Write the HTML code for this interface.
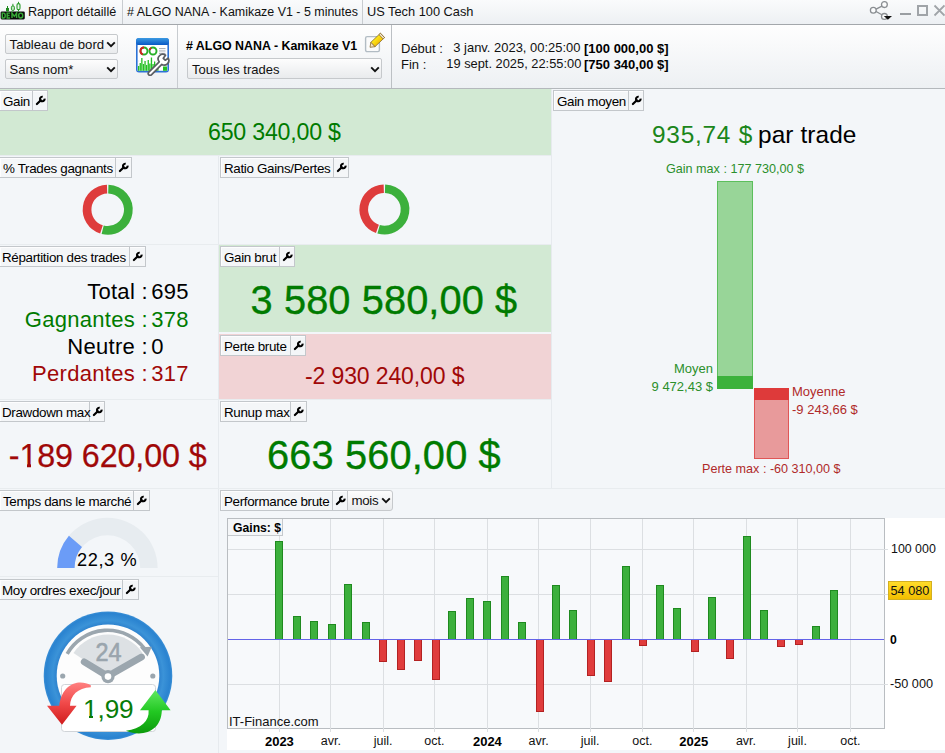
<!DOCTYPE html>
<html><head><meta charset="utf-8">
<style>
*{margin:0;padding:0;box-sizing:border-box}
html,body{width:945px;height:753px;overflow:hidden;background:#f3f6f9;font-family:"Liberation Sans",sans-serif;color:#000;position:relative}
.a{position:absolute}
.t{position:absolute;white-space:pre}
.lb{position:absolute;height:21px;border:1px solid #c3c7cb;background:#f4f6f8;box-shadow:inset 1px 1px 0 #fdfdfe}
.sel{position:absolute;border:1px solid #c6c9cc;border-radius:2px;background:linear-gradient(#fdfdfd,#e9ebed)}
</style></head><body>

<div class="a" style="left:0;top:0;width:945px;height:24px;background:linear-gradient(#fafbfc,#edf0f3)"></div>
<div class="a" style="left:0;top:24px;width:945px;height:1px;background:#a3a7ab"></div>
<svg class="a" style="left:0;top:1px" width="26" height="20" viewBox="0 1 26 20">
<rect x="0.6" y="11.4" width="24.2" height="8" rx="1.3" fill="#0a0a0a"/>
<g fill="none" stroke="#36a836" stroke-width="1.45"><path d="M2.3 13.1 V18 H3.7 Q5.2 18 5.2 15.55 Q5.2 13.1 3.7 13.1 Z"/><path d="M10.1 13.1 H7.2 V18 H10.1 M7.2 15.5 H9.6"/><path d="M12 18.1 V13.1 L14.3 16.3 L16.6 13.1 V18.1"/><ellipse cx="20.7" cy="15.55" rx="2.05" ry="2.45"/></g>
<line x1="7.5" y1="6" x2="7.5" y2="11.4" stroke="#1f8a1f" stroke-width="1"/><rect x="6" y="8" width="3" height="3.4" fill="#1f8a1f"/>
<line x1="12.9" y1="3.8" x2="12.9" y2="11.4" stroke="#2a9a2a" stroke-width="1"/><rect x="11.4" y="6" width="3" height="4.4" rx="1.2" fill="#bfe6bf" stroke="#2a9a2a" stroke-width="1"/>
<line x1="18.5" y1="1.8" x2="18.5" y2="11.4" stroke="#2a9a2a" stroke-width="1"/><rect x="17" y="3.6" width="3" height="6" rx="1.4" fill="#e8f5e8" stroke="#2a9a2a" stroke-width="1.1"/>
</svg>
<div class="t" style="left:28px;top:6.33px;font-size:12.6px;line-height:12.6px;color:#111;font-weight:normal;letter-spacing:0px;">Rapport détaillé</div>
<div class="a" style="left:122px;top:0;width:1px;height:24px;background:#c8ccd0"></div>
<div class="t" style="left:127px;top:6.46px;font-size:12.45px;line-height:12.45px;color:#111;font-weight:normal;letter-spacing:0px;"># ALGO NANA - Kamikaze V1 - 5 minutes</div>
<div class="a" style="left:362px;top:0;width:1px;height:24px;background:#c8ccd0"></div>
<div class="t" style="left:367px;top:6.16px;font-size:12.8px;line-height:12.8px;color:#111;font-weight:normal;letter-spacing:0px;">US Tech 100 Cash</div>
<svg class="a" style="left:864px;top:0" width="32" height="24" viewBox="0 0 32 24">
<g fill="#fbfcfd" stroke="#8a8e92" stroke-width="1.3">
<path d="M17.9 6.2 L11.6 9.3 M11.6 11.3 L17.9 14.8" fill="none"/>
<circle cx="20.4" cy="4.6" r="2.9"/><circle cx="9.3" cy="10.2" r="2.9"/><circle cx="20.4" cy="16.4" r="2.9"/>
</g><path d="M19.8 16 L28 16 L23.9 19.8 Z" fill="#111"/>
</svg>
<div class="a" style="left:900px;top:13px;width:11px;height:2px;background:#9a9ea2"></div>
<div class="a" style="left:917px;top:5px;width:11px;height:11px;border:2px solid #a0a4a8"></div>
<svg class="a" style="left:933px;top:4px" width="14" height="14" viewBox="0 0 14 14"><path d="M1.5 1.5 L11.5 11.5 M11.5 1.5 L1.5 11.5" stroke="#a0a4a8" stroke-width="1.8"/></svg>
<div class="a" style="left:0;top:25px;width:945px;height:63px;background:linear-gradient(#fefefe,#edf0f3)"></div>
<div class="a" style="left:0;top:88px;width:945px;height:1px;background:#b4b8bc"></div>
<div class="sel" style="left:5px;top:34px;width:113px;height:20px"></div>
<div class="t" style="left:9.6px;top:37.83px;font-size:13.2px;line-height:13.2px;color:#111;font-weight:normal;letter-spacing:0px;">Tableau de bord</div>
<svg class="a" style="left:106px;top:41px" width="10" height="7" viewBox="0 0 10 7"><path d="M1.2 1.4 L5 5.2 L8.8 1.4" fill="none" stroke="#111" stroke-width="1.9"/></svg>
<div class="sel" style="left:5px;top:59px;width:113px;height:20px"></div>
<div class="t" style="left:9.6px;top:63.00px;font-size:13px;line-height:13px;color:#111;font-weight:normal;letter-spacing:0px;">Sans nom*</div>
<svg class="a" style="left:106px;top:66px" width="10" height="7" viewBox="0 0 10 7"><path d="M1.2 1.4 L5 5.2 L8.8 1.4" fill="none" stroke="#111" stroke-width="1.9"/></svg>
<svg class="a" style="left:134px;top:36px" width="40" height="40" viewBox="0 0 40 40">
<defs><linearGradient id="hb" x1="0" y1="0" x2="0" y2="1"><stop offset="0" stop-color="#3b9ae2"/><stop offset="1" stop-color="#0858c4"/></linearGradient></defs>
<rect x="2" y="2" width="33" height="34.5" rx="3" fill="#2c72d6"/>
<rect x="2" y="2" width="33" height="7" rx="3" fill="url(#hb)"/>
<rect x="3.6" y="9" width="29.8" height="25.8" fill="#fff"/>
<circle cx="10" cy="15" r="3.5" fill="none" stroke="#28b028" stroke-width="1.9"/>
<path d="M10 11.5 A3.5 3.5 0 0 0 8.8 18.3" fill="none" stroke="#d42020" stroke-width="1.9"/>
<circle cx="19" cy="15" r="3.5" fill="none" stroke="#28b028" stroke-width="1.9"/>
<path d="M17.2 12 A3.5 3.5 0 0 0 15.6 14" fill="none" stroke="#d42020" stroke-width="1.9"/>
<rect x="25" y="12" width="6.5" height="1.1" fill="#a9b0b8"/><rect x="25" y="14.4" width="6.5" height="1.1" fill="#a9b0b8"/><rect x="25" y="16.8" width="6.5" height="1.1" fill="#a9b0b8"/>
<path d="M4 25 H33 M4 29 H33" stroke="#e2e4e8" stroke-width="0.8" stroke-dasharray="1 1"/>
<g fill="#22c022"><rect x="4" y="30" width="1.3" height="4.8"/><rect x="5.6" y="27" width="1.3" height="7.8"/><rect x="7.2" y="22" width="1.3" height="12.8"/><rect x="8.8" y="28" width="1.3" height="6.8"/><rect x="10.4" y="25" width="1.3" height="9.8"/><rect x="12" y="29" width="1.3" height="5.8"/><rect x="13.6" y="24" width="1.3" height="10.8"/><rect x="15.2" y="27.5" width="1.3" height="7.3"/><rect x="16.8" y="21.5" width="1.3" height="13.3"/><rect x="18.4" y="28" width="1.3" height="6.8"/><rect x="20" y="25.5" width="1.3" height="9.3"/><rect x="21.6" y="30" width="1.3" height="4.8"/><rect x="23.2" y="27" width="1.3" height="7.8"/><rect x="29" y="30.5" width="4" height="4.3"/></g>
<path d="M14.8 36.2 L25.2 25.8 A4.6 4.6 0 0 1 31.5 19.2 L29.3 22.3 L31.2 24.2 L34.2 22.2 A4.6 4.6 0 0 1 27.8 28.4 L17.4 38.8 A1.8 1.8 0 0 1 14.8 36.2 Z" fill="#fff" stroke="#5a5e62" stroke-width="1.7" stroke-linejoin="round"/>
</svg>
<div class="a" style="left:177px;top:25px;width:1px;height:63px;background:#c8ccd0"></div>
<div class="t" style="left:186px;top:39.50px;font-size:12.4px;line-height:12.4px;color:#000;font-weight:bold;letter-spacing:0px;"># ALGO NANA - Kamikaze V1</div>
<svg class="a" style="left:364px;top:32px" width="24" height="22" viewBox="0 0 24 22">
<defs><linearGradient id="pg" x1="0" y1="0" x2="1" y2="1"><stop offset="0.3" stop-color="#fff01e"/><stop offset="0.75" stop-color="#f2b400"/></linearGradient></defs>
<rect x="1.6" y="4.6" width="13.8" height="15" rx="1.6" fill="#fbfbfb" stroke="#b2bcc4" stroke-width="1.4"/>
<path d="M6.83 10.37 L16.43 1.23 L20.57 5.57 L10.97 14.71 Z" fill="url(#pg)" stroke="#8a6a2a" stroke-width="0.8" stroke-linejoin="round"/>
<path d="M14.98 2.61 L16.43 1.23 L20.57 5.57 L19.12 6.95 Z" fill="#f1e6d2" stroke="#8a6a2a" stroke-width="0.8"/>
<path d="M6 15.3 L6.83 10.37 L10.97 14.71 Z" fill="#f6e4c0" stroke="#8a6a2a" stroke-width="0.8" stroke-linejoin="round"/>
</svg>
<div class="sel" style="left:187px;top:58px;width:195px;height:21px"></div>
<div class="t" style="left:192px;top:62.50px;font-size:13px;line-height:13px;color:#111;font-weight:normal;letter-spacing:0px;">Tous les trades</div>
<svg class="a" style="left:370px;top:66px" width="10" height="7" viewBox="0 0 10 7"><path d="M1.2 1.4 L5 5.2 L8.8 1.4" fill="none" stroke="#111" stroke-width="1.9"/></svg>
<div class="a" style="left:391px;top:25px;width:1px;height:63px;background:#bcc0c4"></div>
<div class="t" style="left:401px;top:42.00px;font-size:13px;line-height:13px;color:#111;font-weight:normal;letter-spacing:0px;">Début :</div>
<div class="t" style="left:453.3px;top:42.04px;font-size:12.95px;line-height:12.95px;color:#111;font-weight:normal;letter-spacing:0px;">3 janv. 2023, 00:25:00</div>
<div class="t" style="left:584px;top:42.00px;font-size:13px;line-height:13px;color:#000;font-weight:bold;letter-spacing:0px;">[100 000,00 $]</div>
<div class="t" style="left:401px;top:58.00px;font-size:13px;line-height:13px;color:#111;font-weight:normal;letter-spacing:0px;">Fin :</div>
<div class="t" style="left:446.3px;top:58.12px;font-size:12.85px;line-height:12.85px;color:#111;font-weight:normal;letter-spacing:0px;">19 sept. 2025, 22:55:00</div>
<div class="t" style="left:584px;top:58.00px;font-size:13px;line-height:13px;color:#000;font-weight:bold;letter-spacing:0px;">[750 340,00 $]</div>
<div class="a" style="left:218px;top:155px;width:1px;height:598px;background:#e6eaee"></div>
<div class="a" style="left:551px;top:89px;width:1px;height:400px;background:#e6eaee"></div>
<div class="a" style="left:0;top:155px;width:551px;height:1px;background:#e8ecef"></div>
<div class="a" style="left:0;top:244px;width:551px;height:1px;background:#e8ecef"></div>
<div class="a" style="left:0;top:399px;width:551px;height:1px;background:#e8ecef"></div>
<div class="a" style="left:0;top:488px;width:945px;height:1px;background:#e8ecef"></div>
<div class="a" style="left:0;top:576px;width:218px;height:1px;background:#e8ecef"></div>
<div class="a" style="left:0;top:89px;width:551px;height:66px;background:#d2e9d3"></div>
<div class="lb" style="left:-1px;top:90px;width:49px"></div>
<div class="a" style="left:32px;top:90px;width:1px;height:21px;background:#c3c7cb"></div>
<div class="a" style="left:33px;top:91px;width:14px;height:19px"><svg width="16" height="20" viewBox="0 0 16 20" style="position:absolute;left:0;top:0px"><path d="M3.9 13.0 L7.8 9.2" stroke="#000" stroke-width="2.2" stroke-linecap="round"/><path d="M11.55 7.6 A2.3 2.3 0 1 1 9.7 5.75" fill="none" stroke="#000" stroke-width="2.1"/></svg></div>
<div class="t" style="left:3px;top:94.56px;font-size:13.4px;line-height:13.4px;color:#000;font-weight:normal;letter-spacing:-0.33px;">Gain</div>
<div class="t" style="left:208px;top:121.06px;font-size:23.2px;line-height:23.2px;color:#007b00;font-weight:normal;letter-spacing:-0.22px;">650 340,00 $</div>
<div class="lb" style="left:553px;top:90px;width:91px"></div>
<div class="a" style="left:628px;top:90px;width:1px;height:21px;background:#c3c7cb"></div>
<div class="a" style="left:629px;top:91px;width:14px;height:19px"><svg width="16" height="20" viewBox="0 0 16 20" style="position:absolute;left:0;top:0px"><path d="M3.9 13.0 L7.8 9.2" stroke="#000" stroke-width="2.2" stroke-linecap="round"/><path d="M11.55 7.6 A2.3 2.3 0 1 1 9.7 5.75" fill="none" stroke="#000" stroke-width="2.1"/></svg></div>
<div class="t" style="left:557px;top:94.56px;font-size:13.4px;line-height:13.4px;color:#000;font-weight:normal;letter-spacing:-0.33px;">Gain moyen</div>
<div class="lb" style="left:-1px;top:157px;width:133px"></div>
<div class="a" style="left:115px;top:157px;width:1px;height:21px;background:#c3c7cb"></div>
<div class="a" style="left:116px;top:158px;width:15px;height:19px"><svg width="16" height="20" viewBox="0 0 16 20" style="position:absolute;left:0;top:0px"><path d="M3.9 13.0 L7.8 9.2" stroke="#000" stroke-width="2.2" stroke-linecap="round"/><path d="M11.55 7.6 A2.3 2.3 0 1 1 9.7 5.75" fill="none" stroke="#000" stroke-width="2.1"/></svg></div>
<div class="t" style="left:3px;top:161.56px;font-size:13.4px;line-height:13.4px;color:#000;font-weight:normal;letter-spacing:-0.33px;">% Trades gagnants</div>
<svg class="a" style="left:0;top:0" width="945" height="753" viewBox="0 0 945 753" ><path d="M108.32 189.06 A20.65 20.65 0 1 1 102.67 229.73" fill="none" stroke="#3cb03c" stroke-width="8.7"/><path d="M101.48 229.39 A20.65 20.65 0 0 1 107.08 189.06" fill="none" stroke="#de3c3c" stroke-width="8.7"/></svg>
<div class="lb" style="left:220px;top:157px;width:129px"></div>
<div class="a" style="left:333px;top:157px;width:1px;height:21px;background:#c3c7cb"></div>
<div class="a" style="left:334px;top:158px;width:14px;height:19px"><svg width="16" height="20" viewBox="0 0 16 20" style="position:absolute;left:0;top:0px"><path d="M3.9 13.0 L7.8 9.2" stroke="#000" stroke-width="2.2" stroke-linecap="round"/><path d="M11.55 7.6 A2.3 2.3 0 1 1 9.7 5.75" fill="none" stroke="#000" stroke-width="2.1"/></svg></div>
<div class="t" style="left:224px;top:161.56px;font-size:13.4px;line-height:13.4px;color:#000;font-weight:normal;letter-spacing:-0.33px;">Ratio Gains/Pertes</div>
<svg class="a" style="left:0;top:0" width="945" height="753" viewBox="0 0 945 753" ><path d="M385.02 188.76 A20.65 20.65 0 1 1 378.61 229.22" fill="none" stroke="#3cb03c" stroke-width="8.7"/><path d="M377.43 228.84 A20.65 20.65 0 0 1 383.78 188.76" fill="none" stroke="#de3c3c" stroke-width="8.7"/></svg>
<div class="lb" style="left:-1px;top:246px;width:147px"></div>
<div class="a" style="left:129px;top:246px;width:1px;height:21px;background:#c3c7cb"></div>
<div class="a" style="left:130px;top:247px;width:15px;height:19px"><svg width="16" height="20" viewBox="0 0 16 20" style="position:absolute;left:0;top:0px"><path d="M3.9 13.0 L7.8 9.2" stroke="#000" stroke-width="2.2" stroke-linecap="round"/><path d="M11.55 7.6 A2.3 2.3 0 1 1 9.7 5.75" fill="none" stroke="#000" stroke-width="2.1"/></svg></div>
<div class="t" style="left:2px;top:250.56px;font-size:13.4px;line-height:13.4px;color:#000;font-weight:normal;letter-spacing:-0.33px;">Répartition des trades</div>
<div class="t" style="right:810.2px;top:280.98px;font-size:22px;line-height:22px;color:#000;font-weight:normal;letter-spacing:0.3px;margin-right:-0.3px">Total</div>
<div class="t" style="left:141.6px;top:280.98px;font-size:22px;line-height:22px;color:#000;font-weight:normal;letter-spacing:0px;">:</div>
<div class="t" style="left:151.2px;top:280.98px;font-size:22px;line-height:22px;color:#000;font-weight:normal;letter-spacing:0.3px;">695</div>
<div class="t" style="right:810.2px;top:308.68px;font-size:22px;line-height:22px;color:#007b00;font-weight:normal;letter-spacing:0.3px;margin-right:-0.3px">Gagnantes</div>
<div class="t" style="left:141.6px;top:308.68px;font-size:22px;line-height:22px;color:#007b00;font-weight:normal;letter-spacing:0px;">:</div>
<div class="t" style="left:151.2px;top:308.68px;font-size:22px;line-height:22px;color:#007b00;font-weight:normal;letter-spacing:0.3px;">378</div>
<div class="t" style="right:810.2px;top:335.88px;font-size:22px;line-height:22px;color:#000;font-weight:normal;letter-spacing:0.3px;margin-right:-0.3px">Neutre</div>
<div class="t" style="left:141.6px;top:335.88px;font-size:22px;line-height:22px;color:#000;font-weight:normal;letter-spacing:0px;">:</div>
<div class="t" style="left:151.2px;top:335.88px;font-size:22px;line-height:22px;color:#000;font-weight:normal;letter-spacing:0.3px;">0</div>
<div class="t" style="right:810.2px;top:363.38px;font-size:22px;line-height:22px;color:#a00808;font-weight:normal;letter-spacing:0.3px;margin-right:-0.3px">Perdantes</div>
<div class="t" style="left:141.6px;top:363.38px;font-size:22px;line-height:22px;color:#a00808;font-weight:normal;letter-spacing:0px;">:</div>
<div class="t" style="left:151.2px;top:363.38px;font-size:22px;line-height:22px;color:#a00808;font-weight:normal;letter-spacing:0.3px;">317</div>
<div class="a" style="left:219px;top:245px;width:332px;height:87px;background:#d2e9d3"></div>
<div class="lb" style="left:220px;top:246px;width:75px"></div>
<div class="a" style="left:279px;top:246px;width:1px;height:21px;background:#c3c7cb"></div>
<div class="a" style="left:280px;top:247px;width:14px;height:19px"><svg width="16" height="20" viewBox="0 0 16 20" style="position:absolute;left:0;top:0px"><path d="M3.9 13.0 L7.8 9.2" stroke="#000" stroke-width="2.2" stroke-linecap="round"/><path d="M11.55 7.6 A2.3 2.3 0 1 1 9.7 5.75" fill="none" stroke="#000" stroke-width="2.1"/></svg></div>
<div class="t" style="left:224px;top:250.56px;font-size:13.4px;line-height:13.4px;color:#000;font-weight:normal;letter-spacing:-0.33px;">Gain brut</div>
<div class="t" style="left:250.6px;top:280.61px;font-size:39.8px;line-height:39.8px;color:#007b00;font-weight:normal;letter-spacing:0.08px;-webkit-text-stroke:0.35px #007b00">3 580 580,00 $</div>
<div class="a" style="left:219px;top:334px;width:332px;height:65px;background:#f1d3d5"></div>
<div class="lb" style="left:220px;top:335px;width:86px"></div>
<div class="a" style="left:290px;top:335px;width:1px;height:21px;background:#c3c7cb"></div>
<div class="a" style="left:291px;top:336px;width:14px;height:19px"><svg width="16" height="20" viewBox="0 0 16 20" style="position:absolute;left:0;top:0px"><path d="M3.9 13.0 L7.8 9.2" stroke="#000" stroke-width="2.2" stroke-linecap="round"/><path d="M11.55 7.6 A2.3 2.3 0 1 1 9.7 5.75" fill="none" stroke="#000" stroke-width="2.1"/></svg></div>
<div class="t" style="left:224px;top:339.56px;font-size:13.4px;line-height:13.4px;color:#000;font-weight:normal;letter-spacing:-0.33px;">Perte brute</div>
<div class="t" style="left:305px;top:365.03px;font-size:23.0px;line-height:23.0px;color:#a00808;font-weight:normal;letter-spacing:-0.12px;">-2 930 240,00 $</div>
<div class="lb" style="left:-1px;top:401px;width:106px"></div>
<div class="a" style="left:89px;top:401px;width:1px;height:21px;background:#c3c7cb"></div>
<div class="a" style="left:90px;top:402px;width:14px;height:19px"><svg width="16" height="20" viewBox="0 0 16 20" style="position:absolute;left:0;top:0px"><path d="M3.9 13.0 L7.8 9.2" stroke="#000" stroke-width="2.2" stroke-linecap="round"/><path d="M11.55 7.6 A2.3 2.3 0 1 1 9.7 5.75" fill="none" stroke="#000" stroke-width="2.1"/></svg></div>
<div class="t" style="left:2px;top:405.56px;font-size:13.4px;line-height:13.4px;color:#000;font-weight:normal;letter-spacing:-0.33px;">Drawdown max</div>
<div class="t" style="left:8.8px;top:439.66px;font-size:32.3px;line-height:32.3px;color:#a00808;font-weight:normal;letter-spacing:-0.12px;-webkit-text-stroke:0.25px #a00808">-189 620,00 $</div>
<div class="lb" style="left:220px;top:401px;width:87px"></div>
<div class="a" style="left:290px;top:401px;width:1px;height:21px;background:#c3c7cb"></div>
<div class="a" style="left:291px;top:402px;width:15px;height:19px"><svg width="16" height="20" viewBox="0 0 16 20" style="position:absolute;left:0;top:0px"><path d="M3.9 13.0 L7.8 9.2" stroke="#000" stroke-width="2.2" stroke-linecap="round"/><path d="M11.55 7.6 A2.3 2.3 0 1 1 9.7 5.75" fill="none" stroke="#000" stroke-width="2.1"/></svg></div>
<div class="t" style="left:224px;top:405.56px;font-size:13.4px;line-height:13.4px;color:#000;font-weight:normal;letter-spacing:-0.33px;">Runup max</div>
<div class="t" style="left:267px;top:435.61px;font-size:39.8px;line-height:39.8px;color:#007b00;font-weight:normal;letter-spacing:0.12px;-webkit-text-stroke:0.35px #007b00">663 560,00 $</div>
<div class="lb" style="left:-1px;top:490px;width:151px"></div>
<div class="a" style="left:133px;top:490px;width:1px;height:21px;background:#c3c7cb"></div>
<div class="a" style="left:134px;top:491px;width:15px;height:19px"><svg width="16" height="20" viewBox="0 0 16 20" style="position:absolute;left:0;top:0px"><path d="M3.9 13.0 L7.8 9.2" stroke="#000" stroke-width="2.2" stroke-linecap="round"/><path d="M11.55 7.6 A2.3 2.3 0 1 1 9.7 5.75" fill="none" stroke="#000" stroke-width="2.1"/></svg></div>
<div class="t" style="left:3px;top:494.56px;font-size:13.4px;line-height:13.4px;color:#000;font-weight:normal;letter-spacing:-0.33px;">Temps dans le marché</div>
<svg class="a" style="left:0;top:0" width="945" height="753" viewBox="0 0 945 753">
<path d="M57.2 568 A50.2 50.2 0 0 1 157.6 568 L140.2 568 A32.8 32.8 0 0 0 74.6 568 Z" fill="#e7ecf0"/>
<path d="M57.2 568 A50.2 50.2 0 0 1 68.9 535.7 L82.0 547.0 A32.8 32.8 0 0 0 74.6 568 Z" fill="#6b9cf7"/>
</svg>
<div class="t" style="left:77px;top:550.59px;font-size:18.2px;line-height:18.2px;color:#000;font-weight:normal;letter-spacing:0.6px;">22,3 %</div>
<div class="lb" style="left:-1px;top:579px;width:140px"></div>
<div class="a" style="left:122px;top:579px;width:1px;height:21px;background:#c3c7cb"></div>
<div class="a" style="left:123px;top:580px;width:15px;height:19px"><svg width="16" height="20" viewBox="0 0 16 20" style="position:absolute;left:0;top:0px"><path d="M3.9 13.0 L7.8 9.2" stroke="#000" stroke-width="2.2" stroke-linecap="round"/><path d="M11.55 7.6 A2.3 2.3 0 1 1 9.7 5.75" fill="none" stroke="#000" stroke-width="2.1"/></svg></div>
<div class="t" style="left:2px;top:583.56px;font-size:13.4px;line-height:13.4px;color:#000;font-weight:normal;letter-spacing:-0.33px;">Moy ordres exec/jour</div>
<svg class="a" style="left:40px;top:605px" width="140" height="140" viewBox="0 0 140 140">
<defs>
<radialGradient id="ring" cx="0.5" cy="0.5" r="0.5"><stop offset="0.78" stop-color="#2b7fcc"/><stop offset="0.86" stop-color="#3b93d8"/><stop offset="0.97" stop-color="#2a83d0"/><stop offset="1" stop-color="#3a8fd6"/></radialGradient>
<linearGradient id="ra" x1="0" y1="0" x2="0" y2="1"><stop offset="0" stop-color="#ff8080"/><stop offset="0.5" stop-color="#f04848"/><stop offset="1" stop-color="#d01c1c"/></linearGradient>
<linearGradient id="ga" x1="0" y1="0" x2="0" y2="1"><stop offset="0" stop-color="#60e860"/><stop offset="0.5" stop-color="#22c822"/><stop offset="1" stop-color="#0c9a0c"/></linearGradient>
</defs>
<circle cx="68" cy="70.7" r="64.3" fill="url(#ring)"/>
<circle cx="68" cy="70.7" r="51.3" fill="#fdfdfd"/>
<path d="M68 71 L33.5 48 A41.5 41.5 0 0 1 102.5 48 Z" fill="#dde1e4"/>
<path d="M27.2 48.8 A46.5 46.5 0 0 1 104.5 43.5" fill="none" stroke="#9ba6ae" stroke-width="3.6"/>
<path d="M99.8 42.2 L111.8 41.8 L107.6 51.6 Z" fill="#9ba6ae"/>
<text x="68.5" y="55.8" font-family="Liberation Sans" font-size="26" fill="#9aa5ad" stroke="#9aa5ad" stroke-width="0.6" text-anchor="middle" textLength="26" lengthAdjust="spacingAndGlyphs">24</text>
<path d="M44.2 56.8 L62.5 68 M73.5 68 L101.5 52" stroke="#9ba6ae" stroke-width="6.8" stroke-linecap="round"/>
<circle cx="68" cy="71.6" r="6.6" fill="#9ba6ae"/><circle cx="68" cy="71.6" r="3.3" fill="#fff"/>
<circle cx="22.7" cy="71" r="2.6" fill="#9ba6ae"/><circle cx="112.8" cy="71" r="2.6" fill="#9ba6ae"/>
<rect x="21.5" y="79.5" width="94" height="47" rx="3" fill="#fff" stroke="#d0d4d8" stroke-width="1"/>
<path d="M50.8 80.2 C40 74.2 22.5 77 19.2 100.8 L7 100.8 L22 119.8 L36.6 100.8 L30 100.8 C30.5 90 37.5 83 50.8 82.2 Z" fill="url(#ra)"/>
<path d="M86 125.8 C104 133 121.5 125 121.8 105.2 L130.6 105.2 L115.4 85 L100 105.2 L108.6 105.2 C109.5 116 101 123.5 86 125.8 Z" fill="url(#ga)"/>
</svg>
<div class="t" style="left:83px;top:695.62px;font-size:26.2px;line-height:26.2px;color:#087c08;font-weight:normal;letter-spacing:-0.1px;">1,99</div>
<div class="t" style="left:652px;top:123.35px;font-size:24.4px;line-height:24.4px;color:#1b861b;font-weight:normal;letter-spacing:0.75px;">935,74 $</div>
<div class="t" style="left:758px;top:123.35px;font-size:24.4px;line-height:24.4px;color:#000;font-weight:normal;letter-spacing:0.1px;">par trade</div>
<div class="t" style="left:666px;top:162.83px;font-size:12.6px;line-height:12.6px;color:#2b8f2b;font-weight:normal;letter-spacing:0px;">Gain max : 177 730,00 $</div>
<div class="a" style="left:717px;top:181px;width:36px;height:208px;background:#98d598;border:1px solid #5cbf5c"></div>
<div class="a" style="left:717px;top:376px;width:36px;height:13px;background:#3cb23c"></div>
<div class="a" style="left:754px;top:388px;width:35px;height:71px;background:#e89a9b;border:1px solid #e05656"></div>
<div class="a" style="left:754px;top:388px;width:35px;height:12px;background:#de3a3a"></div>
<div class="t" style="right:232px;top:361.50px;font-size:13px;line-height:13px;color:#2b8f2b;font-weight:normal;letter-spacing:0px;">Moyen</div>
<div class="t" style="right:232px;top:379.50px;font-size:13px;line-height:13px;color:#2b8f2b;font-weight:normal;letter-spacing:0px;">9 472,43 $</div>
<div class="t" style="left:792px;top:384.50px;font-size:13px;line-height:13px;color:#b02a2a;font-weight:normal;letter-spacing:0px;">Moyenne</div>
<div class="t" style="left:792px;top:403.00px;font-size:13px;line-height:13px;color:#b02a2a;font-weight:normal;letter-spacing:0px;">-9 243,66 $</div>
<div class="t" style="left:702px;top:463.33px;font-size:12.6px;line-height:12.6px;color:#b02a2a;font-weight:normal;letter-spacing:0px;">Perte max : -60 310,00 $</div>
<div class="a" style="left:227px;top:518px;width:718px;height:232px;background:#ffffff"></div>
<div class="a" style="left:227px;top:518px;width:658px;height:211px;background:#f7f9fb;border:1px solid #b9bdc1"></div>
<div class="lb" style="left:220px;top:490px;width:128px"></div>
<div class="a" style="left:332px;top:490px;width:1px;height:21px;background:#c3c7cb"></div>
<div class="a" style="left:333px;top:491px;width:14px;height:19px"><svg width="16" height="20" viewBox="0 0 16 20" style="position:absolute;left:0;top:0px"><path d="M3.9 13.0 L7.8 9.2" stroke="#000" stroke-width="2.2" stroke-linecap="round"/><path d="M11.55 7.6 A2.3 2.3 0 1 1 9.7 5.75" fill="none" stroke="#000" stroke-width="2.1"/></svg></div>
<div class="t" style="left:224px;top:494.56px;font-size:13.4px;line-height:13.4px;color:#000;font-weight:normal;letter-spacing:-0.33px;">Performance brute</div>
<div class="sel" style="left:347px;top:490px;width:46px;height:21px;border-radius:0 3px 3px 0"></div>
<div class="t" style="left:351.5px;top:494.24px;font-size:13.3px;line-height:13.3px;color:#111;font-weight:normal;letter-spacing:-0.3px;">mois</div>
<svg class="a" style="left:380.5px;top:497px" width="10" height="7" viewBox="0 0 10 7"><path d="M1.2 1.4 L5 5.2 L8.8 1.4" fill="none" stroke="#111" stroke-width="1.9"/></svg>
<svg class="a" style="left:0;top:0" width="945" height="753" viewBox="0 0 945 753"><line x1="228" y1="549.5" x2="888" y2="549.5" stroke="#dcdfe2" stroke-width="1"/><line x1="228" y1="594.5" x2="888" y2="594.5" stroke="#dcdfe2" stroke-width="1"/><line x1="228" y1="684.5" x2="888" y2="684.5" stroke="#dcdfe2" stroke-width="1"/><line x1="279.5" y1="519" x2="279.5" y2="732" stroke="#dcdfe2" stroke-width="1"/><line x1="330.5" y1="519" x2="330.5" y2="732" stroke="#dcdfe2" stroke-width="1"/><line x1="383.5" y1="519" x2="383.5" y2="732" stroke="#dcdfe2" stroke-width="1"/><line x1="434.5" y1="519" x2="434.5" y2="732" stroke="#dcdfe2" stroke-width="1"/><line x1="487.5" y1="519" x2="487.5" y2="732" stroke="#dcdfe2" stroke-width="1"/><line x1="538.5" y1="519" x2="538.5" y2="732" stroke="#dcdfe2" stroke-width="1"/><line x1="590.5" y1="519" x2="590.5" y2="732" stroke="#dcdfe2" stroke-width="1"/><line x1="642.5" y1="519" x2="642.5" y2="732" stroke="#dcdfe2" stroke-width="1"/><line x1="693.5" y1="519" x2="693.5" y2="732" stroke="#dcdfe2" stroke-width="1"/><line x1="746.5" y1="519" x2="746.5" y2="732" stroke="#dcdfe2" stroke-width="1"/><line x1="797.5" y1="519" x2="797.5" y2="732" stroke="#dcdfe2" stroke-width="1"/><line x1="850.5" y1="519" x2="850.5" y2="732" stroke="#dcdfe2" stroke-width="1"/><rect x="275.5" y="541.5" width="7" height="98" fill="#3cb03c" stroke="#1f8a1f" stroke-width="1"/><rect x="293.5" y="616.5" width="7" height="23" fill="#3cb03c" stroke="#1f8a1f" stroke-width="1"/><rect x="310.5" y="621.5" width="7" height="18" fill="#3cb03c" stroke="#1f8a1f" stroke-width="1"/><rect x="328.5" y="624.5" width="7" height="15" fill="#3cb03c" stroke="#1f8a1f" stroke-width="1"/><rect x="344.5" y="584.5" width="7" height="55" fill="#3cb03c" stroke="#1f8a1f" stroke-width="1"/><rect x="362.5" y="622.5" width="7" height="17" fill="#3cb03c" stroke="#1f8a1f" stroke-width="1"/><rect x="379.5" y="639.5" width="7" height="22" fill="#e03c3c" stroke="#b32222" stroke-width="1"/><rect x="397.5" y="639.5" width="7" height="30" fill="#e03c3c" stroke="#b32222" stroke-width="1"/><rect x="414.5" y="639.5" width="7" height="21" fill="#e03c3c" stroke="#b32222" stroke-width="1"/><rect x="432.5" y="639.5" width="7" height="40" fill="#e03c3c" stroke="#b32222" stroke-width="1"/><rect x="448.5" y="611.5" width="7" height="28" fill="#3cb03c" stroke="#1f8a1f" stroke-width="1"/><rect x="466.5" y="598.5" width="7" height="41" fill="#3cb03c" stroke="#1f8a1f" stroke-width="1"/><rect x="483.5" y="601.5" width="7" height="38" fill="#3cb03c" stroke="#1f8a1f" stroke-width="1"/><rect x="501.5" y="576.5" width="7" height="63" fill="#3cb03c" stroke="#1f8a1f" stroke-width="1"/><rect x="518.5" y="622.5" width="7" height="17" fill="#3cb03c" stroke="#1f8a1f" stroke-width="1"/><rect x="536.5" y="639.5" width="7" height="72" fill="#e03c3c" stroke="#b32222" stroke-width="1"/><rect x="552.5" y="585.5" width="7" height="54" fill="#3cb03c" stroke="#1f8a1f" stroke-width="1"/><rect x="569.5" y="610.5" width="7" height="29" fill="#3cb03c" stroke="#1f8a1f" stroke-width="1"/><rect x="587.5" y="639.5" width="7" height="36" fill="#e03c3c" stroke="#b32222" stroke-width="1"/><rect x="604.5" y="639.5" width="7" height="42" fill="#e03c3c" stroke="#b32222" stroke-width="1"/><rect x="622.5" y="566.5" width="7" height="73" fill="#3cb03c" stroke="#1f8a1f" stroke-width="1"/><rect x="639.5" y="639.5" width="7" height="6" fill="#e03c3c" stroke="#b32222" stroke-width="1"/><rect x="656.5" y="585.5" width="7" height="54" fill="#3cb03c" stroke="#1f8a1f" stroke-width="1"/><rect x="673.5" y="608.5" width="7" height="31" fill="#3cb03c" stroke="#1f8a1f" stroke-width="1"/><rect x="691.5" y="639.5" width="7" height="12" fill="#e03c3c" stroke="#b32222" stroke-width="1"/><rect x="708.5" y="597.5" width="7" height="42" fill="#3cb03c" stroke="#1f8a1f" stroke-width="1"/><rect x="726.5" y="639.5" width="7" height="19" fill="#e03c3c" stroke="#b32222" stroke-width="1"/><rect x="743.5" y="536.5" width="7" height="103" fill="#3cb03c" stroke="#1f8a1f" stroke-width="1"/><rect x="760.5" y="610.5" width="7" height="29" fill="#3cb03c" stroke="#1f8a1f" stroke-width="1"/><rect x="777.5" y="639.5" width="7" height="7" fill="#e03c3c" stroke="#b32222" stroke-width="1"/><rect x="795.5" y="639.5" width="7" height="5" fill="#e03c3c" stroke="#b32222" stroke-width="1"/><rect x="812.5" y="626.5" width="7" height="13" fill="#3cb03c" stroke="#1f8a1f" stroke-width="1"/><rect x="830.5" y="590.5" width="7" height="49" fill="#3cb03c" stroke="#1f8a1f" stroke-width="1"/><line x1="228" y1="639.5" x2="884" y2="639.5" stroke="#6464e8" stroke-width="1.1"/></svg>
<div class="a" style="left:228px;top:519px;width:55px;height:17px;background:#f4f6f8;border-right:1px solid #c5c9cd;border-bottom:1px solid #c5c9cd"></div>
<div class="t" style="left:233px;top:521.67px;font-size:12.2px;line-height:12.2px;color:#000;font-weight:bold;letter-spacing:0px;">Gains: $</div>
<div class="t" style="left:229px;top:715.00px;font-size:13px;line-height:13px;color:#111;font-weight:normal;letter-spacing:0px;">IT-Finance.com</div>
<div class="t" style="left:891px;top:542.50px;font-size:12.4px;line-height:12.4px;color:#111;font-weight:normal;letter-spacing:0px;">100 000</div>
<div class="a" style="left:888px;top:581px;width:44px;height:19px;background:linear-gradient(#ffdc2a,#f2be00);border:1px solid #d4b020"></div>
<div class="t" style="left:890.5px;top:584.75px;font-size:12.7px;line-height:12.7px;color:#111;font-weight:normal;letter-spacing:0px;">54 080</div>
<div class="t" style="left:890px;top:633.67px;font-size:12.2px;line-height:12.2px;color:#000;font-weight:bold;letter-spacing:0px;">0</div>
<div class="t" style="left:890px;top:678.25px;font-size:12.7px;line-height:12.7px;color:#111;font-weight:normal;letter-spacing:0px;">-50 000</div>
<div class="t" style="left:279.4px;transform:translateX(-50%);top:735.00px;font-size:13px;line-height:13px;color:#000;font-weight:bold;letter-spacing:0px;">2023</div>
<div class="t" style="left:330.9px;transform:translateX(-50%);top:735.42px;font-size:12.5px;line-height:12.5px;color:#111;font-weight:normal;letter-spacing:0px;">avr.</div>
<div class="t" style="left:383.1px;transform:translateX(-50%);top:735.42px;font-size:12.5px;line-height:12.5px;color:#111;font-weight:normal;letter-spacing:0px;">juil.</div>
<div class="t" style="left:434.3px;transform:translateX(-50%);top:735.42px;font-size:12.5px;line-height:12.5px;color:#111;font-weight:normal;letter-spacing:0px;">oct.</div>
<div class="t" style="left:487.4px;transform:translateX(-50%);top:735.00px;font-size:13px;line-height:13px;color:#000;font-weight:bold;letter-spacing:0px;">2024</div>
<div class="t" style="left:538.7px;transform:translateX(-50%);top:735.42px;font-size:12.5px;line-height:12.5px;color:#111;font-weight:normal;letter-spacing:0px;">avr.</div>
<div class="t" style="left:590.2px;transform:translateX(-50%);top:735.42px;font-size:12.5px;line-height:12.5px;color:#111;font-weight:normal;letter-spacing:0px;">juil.</div>
<div class="t" style="left:642.4px;transform:translateX(-50%);top:735.42px;font-size:12.5px;line-height:12.5px;color:#111;font-weight:normal;letter-spacing:0px;">oct.</div>
<div class="t" style="left:693.8px;transform:translateX(-50%);top:735.00px;font-size:13px;line-height:13px;color:#000;font-weight:bold;letter-spacing:0px;">2025</div>
<div class="t" style="left:746px;transform:translateX(-50%);top:735.42px;font-size:12.5px;line-height:12.5px;color:#111;font-weight:normal;letter-spacing:0px;">avr.</div>
<div class="t" style="left:797.5px;transform:translateX(-50%);top:735.42px;font-size:12.5px;line-height:12.5px;color:#111;font-weight:normal;letter-spacing:0px;">juil.</div>
<div class="t" style="left:850.4px;transform:translateX(-50%);top:735.42px;font-size:12.5px;line-height:12.5px;color:#111;font-weight:normal;letter-spacing:0px;">oct.</div>
<div class="a" style="left:21px;top:464px;width:6px;height:4px;background:#f3f6f9"></div>
<div class="a" style="left:31px;top:464px;width:6px;height:4px;background:#f3f6f9"></div>
<div class="a" style="left:84px;top:716px;width:5px;height:3px;background:#fff"></div>
<div class="a" style="left:93px;top:716px;width:4px;height:3px;background:#fff"></div>
</body></html>
